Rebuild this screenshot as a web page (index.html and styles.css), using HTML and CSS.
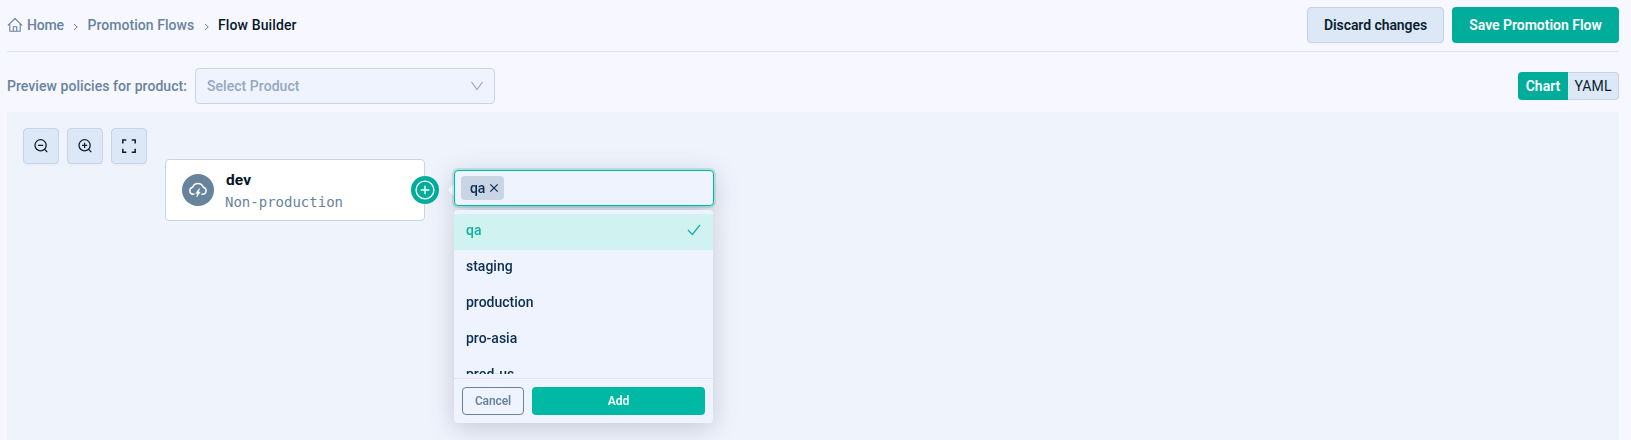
FILE: index.html
```html
<!DOCTYPE html>
<html lang="en">
<head>
<meta charset="utf-8">
<title>Flow Builder</title>
<link rel="stylesheet" href="styles.css">
</head>
<body>
<header class="topbar">
  <nav class="crumbs">
    <a class="crumb home"><svg width="16" height="16" viewBox="0 0 16 16" fill="none" stroke="currentColor" stroke-width="1.1" stroke-linejoin="round" stroke-linecap="round"><path d="M1.2 8.2 8 1.5l6.800 6.700M2.800 7v7.300h10.400V7M6.300 14.200V9.800h3.400v4.400"/></svg><span class="t-home">Home</span></a>
    <svg class="sep" width="6" height="8" viewBox="0 0 6 8" fill="none" stroke="currentColor"><path d="m1 1 3.200 3L1 7"/></svg>
    <a class="crumb t-flows">Promotion Flows</a>
    <svg class="sep" width="6" height="8" viewBox="0 0 6 8" fill="none" stroke="currentColor"><path d="m1 1 3.200 3L1 7"/></svg>
    <span class="crumb current">Flow Builder</span>
  </nav>
  <div class="actions">
    <button class="btn discard">Discard changes</button>
    <button class="btn save">Save Promotion Flow</button>
  </div>
</header>
<section class="filters">
  <label class="filter-label">Preview policies for product:</label>
  <div class="product-select"><span>Select Product</span><svg width="14" height="12" viewBox="0 0 14 12" fill="none" stroke="currentColor" stroke-width="1.200"><path d="m1.500 2 5.500 7.500L12.500 2"/></svg></div>
  <div class="view-toggle"><span class="view chart">Chart</span><span class="view yaml">YAML</span></div>
</section>
<main class="canvas">
  <div class="tools">
    <button class="tool"><svg width="16" height="16" viewBox="0 0 16 16" fill="none" stroke="currentColor" stroke-width="1.300"><circle cx="7.600" cy="7.300" r="5.600"/><path d="M5 7.300h5.200M11.600 11.400l2.700 2.700"/></svg></button>
    <button class="tool"><svg width="16" height="16" viewBox="0 0 16 16" fill="none" stroke="currentColor" stroke-width="1.300"><circle cx="7.600" cy="7.300" r="5.600"/><path d="M5 7.300h5.200M7.600 4.700v5.200M11.600 11.400l2.700 2.700"/></svg></button>
    <button class="tool"><svg width="16" height="16" viewBox="0 0 16 16" fill="none" stroke="currentColor" stroke-width="1.500"><path d="M1.800 5.500V2h3.500M10.700 2h3.500v3.500M14.200 10.700v3.500h-3.500M5.300 14.200H1.800v-3.500"/></svg></button>
  </div>
  <article class="node">
    <div class="node-icon"><svg width="20" height="16" viewBox="0 0 20 16" fill="none" stroke="#fff" stroke-width="1.400" stroke-linecap="round"><path d="M6 12.300H5a3.600 3.600 0 0 1-.3-7.100A5.600 5.600 0 0 1 15.200 5.200a3.600 3.600 0 0 1-.2 7.100h-1.100"/><path d="M10.800 7 7.800 11.400h1.700l-.8 3.600 3.500-4.900h-1.900l1.300-3.100z" fill="#fff" stroke-width=".5"/></svg></div>
    <div class="node-text"><div class="node-name">dev</div><div class="node-kind">Non-production</div></div>
    <button class="node-add"><svg width="28" height="28" viewBox="0 0 28 28" fill="none" stroke="#fff"><circle cx="14" cy="14" r="8.900" stroke-width="1.400"/><path d="M9.700 14h8.600M14 9.700v8.600" stroke-width="1.400"/></svg></button>
  </article>
  <div class="popover">
    <div class="env-input"><span class="tag"><span>qa</span><svg width="10" height="10" viewBox="0 0 10 10" fill="none" stroke="currentColor" stroke-width="1.200"><path d="m1.300 1.300 7.400 7.400M8.700 1.300 1.300 8.700"/></svg></span></div>
    <div class="dropdown">
      <div class="options">
        <div class="option selected"><span>qa</span><svg width="14" height="12" viewBox="0 0 14 12" fill="none" stroke="currentColor" stroke-width="1.300"><path d="m1 6 4.300 4.500L13 1"/></svg></div>
        <div class="option">staging</div>
        <div class="option">production</div>
        <div class="option">pro-asia</div>
        <div class="option">prod-us</div>
      </div>
      <div class="footer"><button class="cancel">Cancel</button><button class="add">Add</button></div>
    </div>
  </div>
</main>
</body>
</html>
```
FILE: styles.css
```css
* { box-sizing: border-box; }
html, body { height: 100%; }
body {
  margin: 0;
  padding: 0 12px 0 7px;
  overflow: hidden;
  display: flex;
  flex-direction: column;
  background: #f7f7ff;
  color: #0b1f30;
  font: 500 14px/20px Roboto, sans-serif;
}
svg { display: block; flex: none; }
button { font: inherit; color: inherit; padding: 0; border: 0; border-radius: 4px; white-space: nowrap; }

.topbar { height: 52px; flex: none; padding: 7px 0 8px; display: flex; justify-content: space-between; border-bottom: 1px solid #dbe5f0; }
.crumbs { display: flex; align-items: center; height: 36px; color: #67849c; letter-spacing: .05px; }
.crumb { white-space: nowrap; }
.home { display: flex; align-items: center; gap: 4px; width: 58px; }
.t-home { letter-spacing: -.2px; }
.sep { margin: 4px 8.5px 0 8px; }
.t-flows { width: 108px; }
.current { color: #07182b; letter-spacing: .12px; }
.actions { display: flex; gap: 8px; }
.btn { height: 36px; font-weight: 600; }
.discard { width: 137px; background: #dce8f6; border: 1px solid #c7d3e4; box-shadow: 0 2px 0 rgba(0, 0, 0, .02); letter-spacing: -.07px; }
.save { width: 167px; background: #00ad9b; color: #fff; letter-spacing: -.02px; }

.filters { height: 60px; flex: none; display: flex; align-items: center; padding-top: 8px; }
.filter-label { width: 188px; color: #67849c; white-space: nowrap; letter-spacing: .06px; }
.product-select { width: 300px; height: 36px; display: flex; align-items: center; justify-content: space-between; padding: 0 10px 0 11px; border: 1px solid #c7d5e6; border-radius: 4px; background: #eef3fe; color: #94a8bf; letter-spacing: .05px; }
.view-toggle { margin-left: auto; display: flex; height: 28px; width: 101px; }
.view { flex: 1; display: flex; align-items: center; justify-content: center; }
.chart { background: #00ad9b; color: #fff; border-radius: 4px 0 0 4px; font-weight: 600; }
.yaml { background: #dce8f6; border: 1px solid #c7d3e4; border-left: 0; border-radius: 0 4px 4px 0; font-weight: 400; letter-spacing: .1px; }

.canvas { flex: 1; position: relative; background: #eef3fc; padding: 16px; overflow: hidden; }
.tools { display: flex; gap: 8px; }
.tool { width: 36px; height: 36px; display: flex; align-items: center; justify-content: center; background: #dce8f6; border: 1px solid #c7d3e8; box-shadow: 0 2px 0 rgba(0, 0, 0, .02); }

.node { position: absolute; left: 158px; top: 47px; width: 260px; height: 62px; display: flex; align-items: center; gap: 11px; padding-left: 16px; background: #fff; border: 1px solid #c8d4e9; border-radius: 4px; }
.node-icon { width: 32px; height: 32px; border-radius: 50%; background: #67849c; display: flex; align-items: center; justify-content: center; }
.node-text { padding-top: 2px; }
.node-name { padding-left: 1px; font-size: 15.500px; font-weight: 700; line-height: 22px; letter-spacing: .1px; color: #041525; }
.node-kind { font: 400 14px/22px "DejaVu Sans Mono", monospace; color: #67849c; }
.node-add { position: absolute; right: -15px; top: 16px; width: 28px; height: 28px; border-radius: 50%; background: #00ad9b; }

.popover { position: absolute; left: 447px; top: 58px; width: 260px; color: #0b2e50; filter: drop-shadow(0 5px 12px rgba(55, 55, 85, .22)); }
.popover::before { content: ""; position: absolute; left: -6px; top: 14px; border: 6px solid transparent; border-left: 0; border-right-color: #f5f6fd; }
.env-input { position: relative; height: 36px; display: flex; align-items: center; padding-left: 6px; border: 1px solid #00b9a3; border-radius: 4px; background: #eef3fe; box-shadow: 0 0 0 2px rgba(0, 173, 155, .2); }
.tag { width: 43px; height: 24px; display: flex; align-items: center; gap: 4px; padding-left: 9px; border-radius: 4px; background: #c9d5e5; letter-spacing: -.2px; }
.dropdown { width: 259px; height: 213px; margin-top: 4px; padding-top: 4px; border-radius: 4px; background: #eef3fe; }
.options { height: 160px; overflow: hidden; letter-spacing: 0; }
.option { height: 36px; padding: 0 12px 4px; display: flex; align-items: center; justify-content: space-between; }
.selected { background: #d0f3f1; color: #12b2a1; }
.footer { margin-top: 4px; padding: 8px; display: flex; gap: 8px; border-top: 1px solid #dbe6f4; font-size: 12px; font-weight: 600; }
.footer button { height: 28px; }
.cancel { width: 62px; background: transparent; border: 1px solid #67849c; color: #67849c; letter-spacing: -.1px; }
.add { flex: 1; background: #00b9a5; color: #fff; }
```
